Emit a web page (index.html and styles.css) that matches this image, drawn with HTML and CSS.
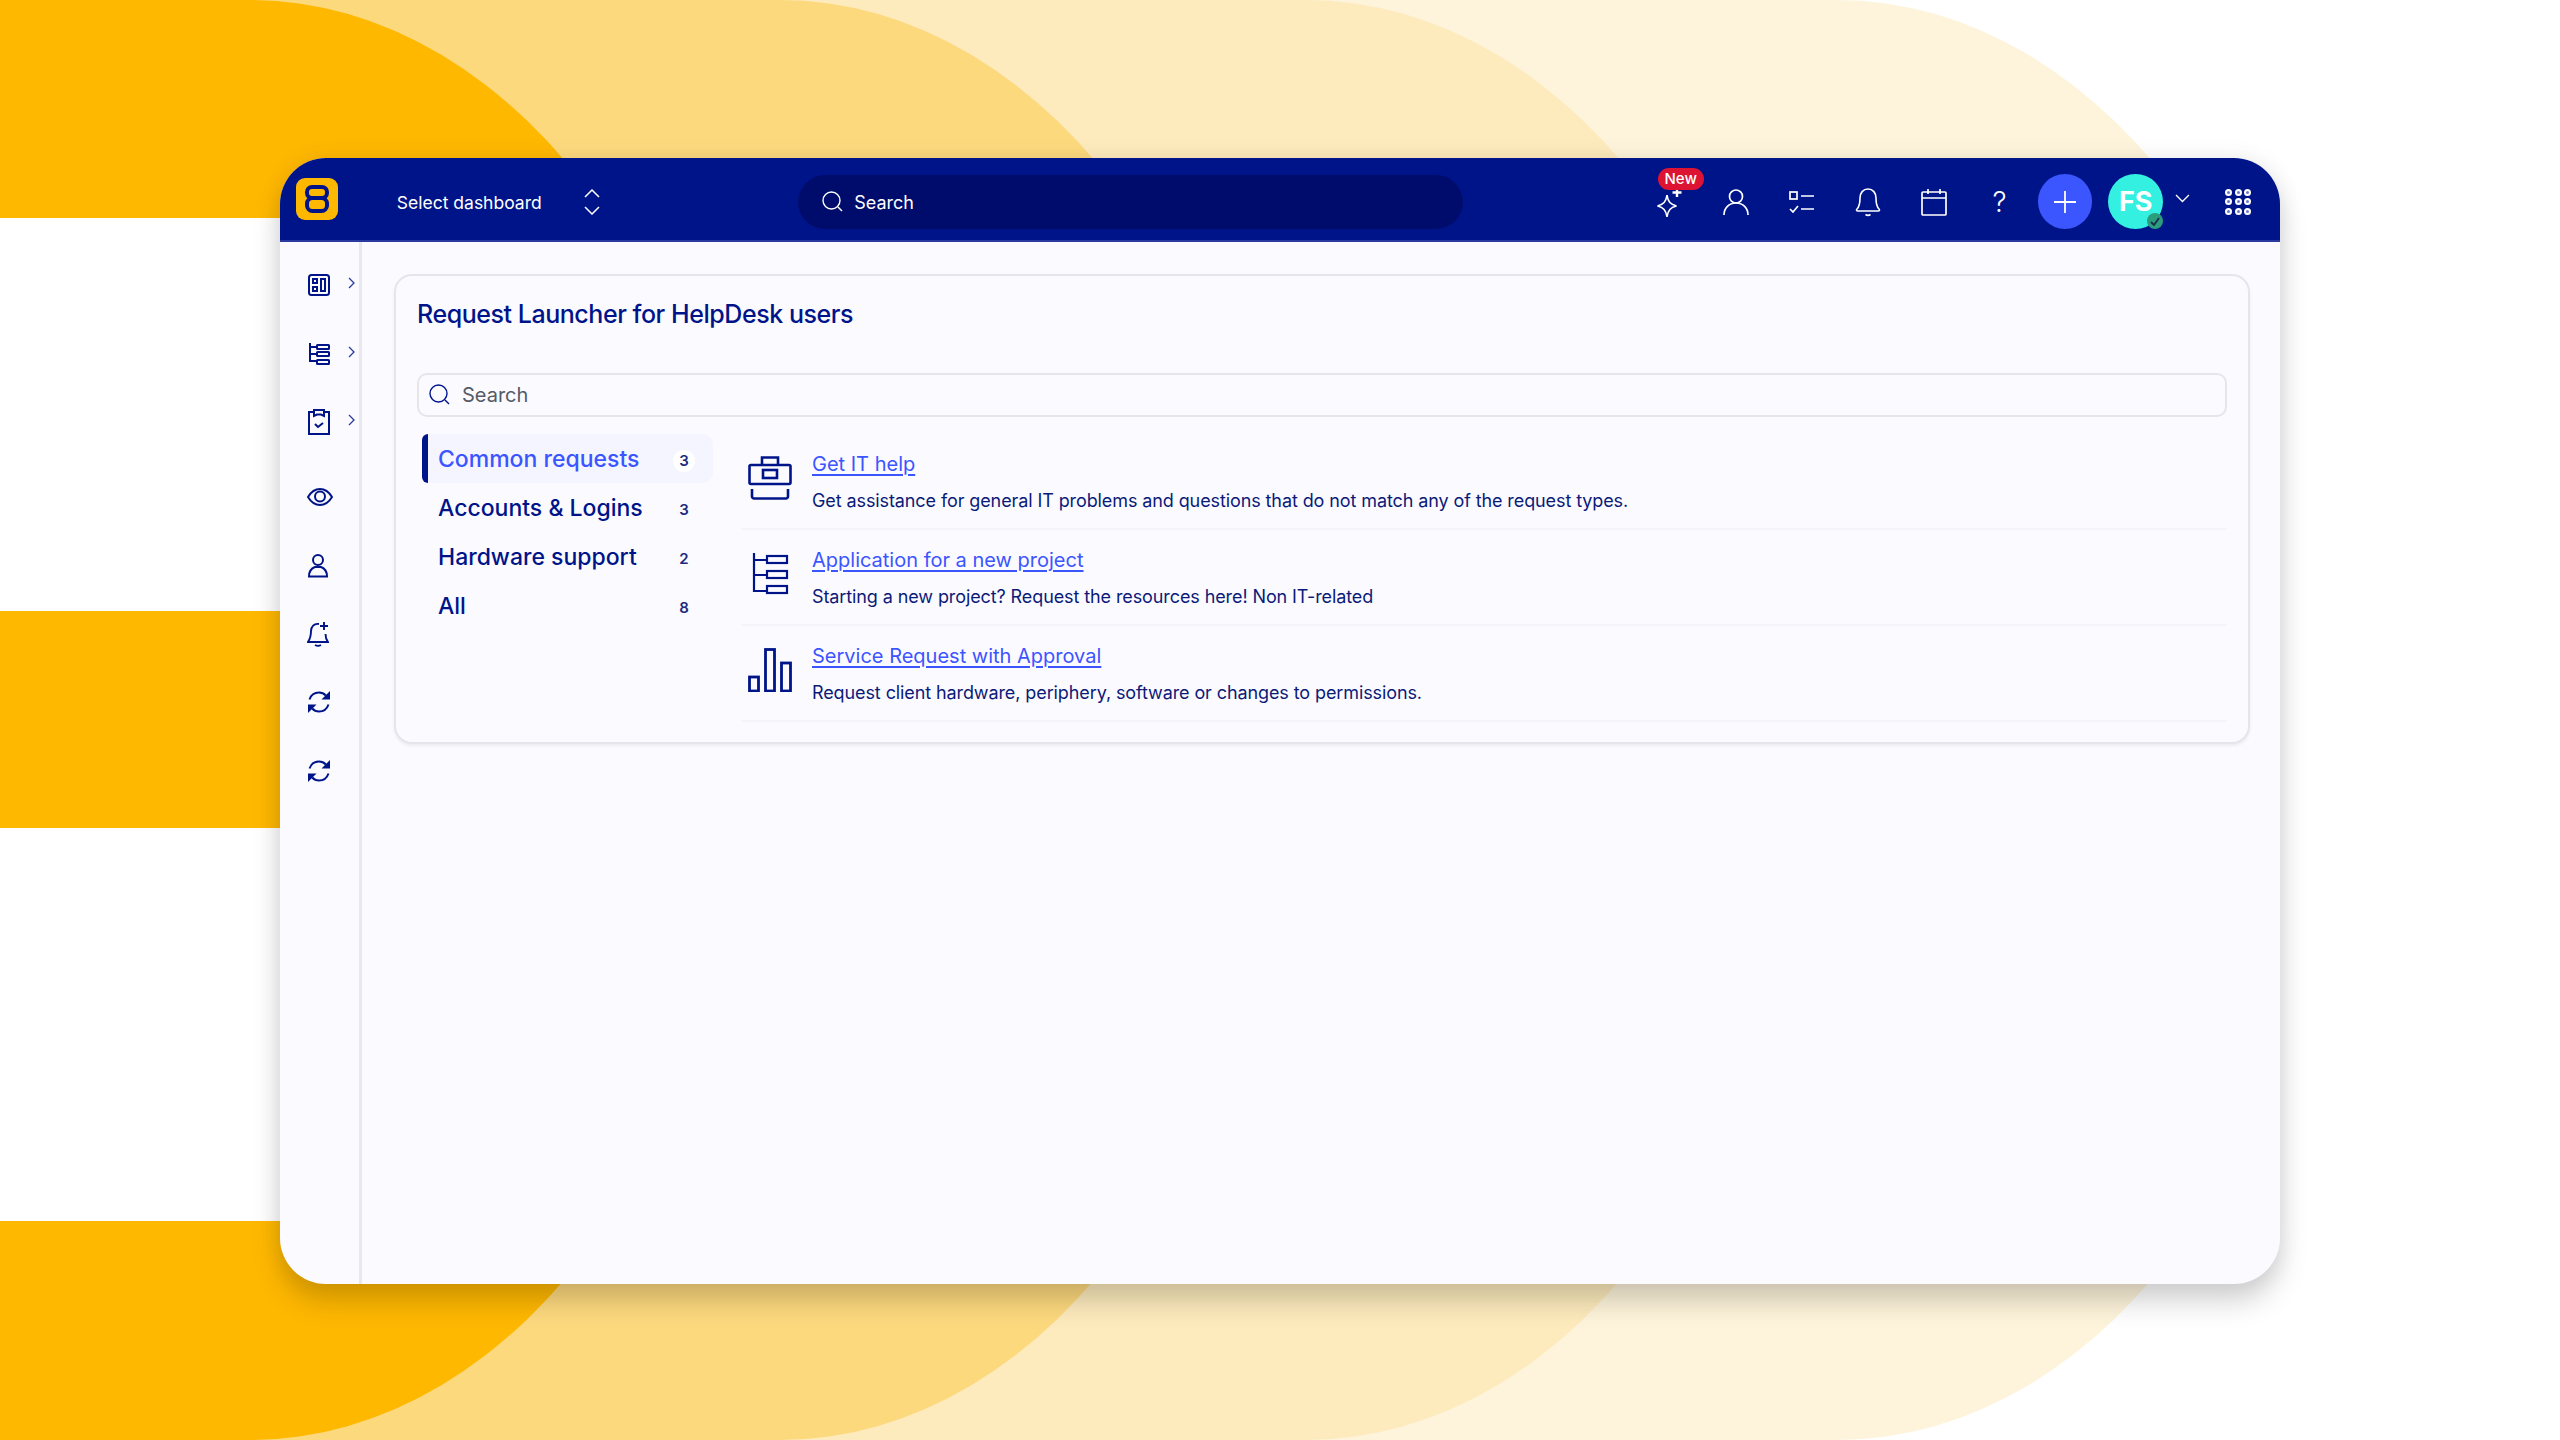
FILE: index.html
```html
<!DOCTYPE html>
<html lang="en">
<head>
  <meta charset="UTF-8" />
  <title>Request Launcher</title>
  <link rel="stylesheet" href="styles.css">
</head>
<body>
  <div class="backdrop">
    <div class="wave wave-4"></div>
    <div class="wave wave-3"></div>
    <div class="wave wave-2"></div>
    <div class="wave wave-1"></div>
    <div class="stripe stripe-top"></div>
    <div class="stripe stripe-bottom"></div>
  </div>

  <div class="window">
    <header class="topbar">
      <div class="logo">
        <svg width="26" height="28" viewBox="0 0 26 28" fill="none" stroke="#001489" stroke-width="4"><rect x="3" y="2" width="20" height="11" rx="5"/><rect x="3" y="13" width="20" height="13" rx="5.5"/></svg>
      </div>
      <div class="dash-select">
        <span class="dash-label">Select dashboard</span>
        <svg width="18" height="26" viewBox="0 0 18 26" fill="none" stroke="#fff" stroke-width="1.5"><path d="M2 8l7-7 7 7M2 18l7 7 7-7"/></svg>
      </div>
      <div class="top-search">
        <svg width="24" height="24" viewBox="0 0 24 24" fill="none" stroke="#fff" stroke-width="1.4"><circle cx="10.5" cy="10.5" r="8.5"/><path d="M17 17l4 4"/></svg>
        <span class="dash-label">Search</span>
      </div>
      <nav class="top-icons">
        <div class="top-icon">
          <span class="badge-new">New</span>
          <svg width="28" height="33" viewBox="0 0 28 33" fill="none" stroke="#fff" stroke-width="1.6"><path d="M11 10c1 7 3.500 9.500 9.500 11-6 1.500-8.500 4-9.500 11-1-7-3.500-9.500-9.500-11 6-1.500 8.500-4 9.500-11z"/><path d="M21 3v9M16.500 7.500h9" stroke-width="2.400"/></svg>
        </div>
        <div class="top-icon">
          <svg width="26" height="28" viewBox="0 0 26 28" fill="none" stroke="#fff" stroke-width="1.7"><circle cx="13" cy="8.500" r="6.500"/><path d="M1 27c0-7 5-12 12-12s12 5 12 12"/></svg>
        </div>
        <div class="top-icon">
          <svg width="26" height="26" viewBox="0 0 26 26" fill="none" stroke="#fff" stroke-width="1.700"><rect x="1" y="3" width="7" height="7"/><path d="M12 7h13M1 20l3 3 5-6M12 20h13"/></svg>
        </div>
        <div class="top-icon">
          <svg width="26" height="30" viewBox="0 0 26 30" fill="none" stroke="#fff" stroke-width="1.600"><path d="M13 2c-5 0-8 4-8 9 0 6-1 9-3 11-1 1-.5 2 1 2h20c1.500 0 2-1 1-2-2-2-3-5-3-11 0-5-3-9-8-9z"/><path d="M10.500 27.500c1.500 1 3.500 1 5 0"/></svg>
        </div>
        <div class="top-icon">
          <svg width="26" height="28" viewBox="0 0 26 28" fill="none" stroke="#fff" stroke-width="1.700"><rect x="1" y="4" width="24" height="23" rx="1"/><path d="M1 10h24M7 1v5M19 1v5"/></svg>
        </div>
        <div class="top-icon">
          <span class="help">?</span>
        </div>
      </nav>
      <div class="add-btn">
        <svg width="24" height="24" viewBox="0 0 24 24" fill="none" stroke="#fff" stroke-width="1.800"><path d="M12 1v22M1 12h22"/></svg>
      </div>
      <div class="avatar">FS
        <span class="avatar-status">
          <svg width="10" height="9" viewBox="0 0 10 9" fill="none" stroke="#1d2b4f" stroke-width="1.800"><path d="M1 5l3 3 5-7"/></svg>
        </span>
      </div>
      <svg class="avatar-caret" width="15" height="9" viewBox="0 0 15 9" fill="none" stroke="#fff" stroke-width="1.300"><path d="M1 1l6.500 6.500L14 1"/></svg>
      <div class="apps">
        <i></i><i></i><i></i><i></i><i></i><i></i><i></i><i></i><i></i>
      </div>
    </header>

    <div class="body-row">
      <aside class="sidebar">
        <div class="side-item">
          <svg width="24" height="24" viewBox="0 0 24 24" fill="none" stroke="#001489" stroke-width="2"><rect x="2" y="2" width="20" height="20" rx="2.500"/><rect x="6" y="6" width="4" height="4"/><rect x="6" y="14" width="4" height="4"/><rect x="14" y="6" width="4" height="12"/></svg>
          <svg class="side-caret" width="7" height="12" viewBox="0 0 7 12" fill="none" stroke="#2b3a9f" stroke-width="1.300"><path d="M1 1l5 5-5 5"/></svg>
        </div>
        <div class="side-item">
          <svg width="24" height="24" viewBox="0 0 24 24" fill="none" stroke="#001489" stroke-width="2"><path d="M3 1v18h7M3 5h7M3 12h7"/><rect x="10" y="3" width="12" height="4" rx=".5"/><rect x="10" y="10" width="12" height="4" rx=".5"/><rect x="10" y="18" width="12" height="4" rx=".5"/></svg>
          <svg class="side-caret" width="7" height="12" viewBox="0 0 7 12" fill="none" stroke="#2b3a9f" stroke-width="1.300"><path d="M1 1l5 5-5 5"/></svg>
        </div>
        <div class="side-item">
          <svg width="24" height="26" viewBox="0 0 24 26" fill="none" stroke="#001489" stroke-width="2"><path d="M7 3H2v22h20V3h-5"/><path d="M7 1h10v6l-3-1.500h-4L7 7z"/><path d="M8 15l3 3 5-4"/></svg>
          <svg class="side-caret" width="7" height="12" viewBox="0 0 7 12" fill="none" stroke="#2b3a9f" stroke-width="1.300"><path d="M1 1l5 5-5 5"/></svg>
        </div>
        <div class="side-item side-break">
          <svg width="26" height="18" viewBox="0 0 26 18" fill="none" stroke="#001489" stroke-width="2"><path d="M1 9c3-5 7-8 12-8s9 3 12 8c-3 5-7 8-12 8S4 14 1 9z"/><circle cx="13" cy="8.500" r="5"/></svg>
        </div>
        <div class="side-item">
          <svg width="22" height="25" viewBox="0 0 22 25" fill="none" stroke="#001489" stroke-width="2"><circle cx="11" cy="7" r="5"/><path d="M2 23.500c0-5 2-8 6-9.500h6c4 1.500 6 4.500 6 9.500z"/></svg>
        </div>
        <div class="side-item">
          <svg width="22" height="26" viewBox="0 0 22 26" fill="none" stroke="#001489" stroke-width="1.900"><path d="M12 3c-5-1-8 3-8 7 0 5-1 8-3 11h20c-1.500-2-2.500-4-2.500-8M8 24c2 1.200 4 1.200 6 0"/><path d="M17 1v8M13 5h8"/></svg>
        </div>
        <div class="side-item">
          <svg width="24" height="24" viewBox="0 0 24 24" fill="none" stroke="#001489" stroke-width="2"><path d="M2.500 9.500C4 5 7.500 2.500 12 2.500c2.800 0 5 1 6.800 3"/><path d="M21.500 14.500C20 19 16.500 21.500 12 21.500c-2.800 0-5-1-6.800-3"/><path d="M23 1v8.500h-8.500z" fill="#001489" stroke="none"/><path d="M1 23v-8.500h8.500z" fill="#001489" stroke="none"/></svg>
        </div>
        <div class="side-item">
          <svg width="24" height="24" viewBox="0 0 24 24" fill="none" stroke="#001489" stroke-width="2"><path d="M2.500 9.500C4 5 7.500 2.500 12 2.500c2.800 0 5 1 6.800 3"/><path d="M21.500 14.500C20 19 16.500 21.500 12 21.500c-2.800 0-5-1-6.800-3"/><path d="M23 1v8.500h-8.500z" fill="#001489" stroke="none"/><path d="M1 23v-8.500h8.500z" fill="#001489" stroke="none"/></svg>
        </div>
      </aside>

      <main class="content">
        <section class="card">
          <h1 class="card-title">Request Launcher for HelpDesk users</h1>
          <div class="card-search">
            <svg width="24" height="24" viewBox="0 0 24 24" fill="none" stroke="#001489" stroke-width="1.400"><circle cx="10.500" cy="10.500" r="8.500"/><path d="M17 17l4 4"/></svg>
            <span>Search</span>
          </div>
          <div class="launcher">
            <ul class="cats">
              <li class="cat active"><span>Common requests</span><b class="count">3</b></li>
              <li class="cat"><span>Accounts &amp; Logins</span><b class="count">3</b></li>
              <li class="cat"><span>Hardware support</span><b class="count">2</b></li>
              <li class="cat"><span>All</span><b class="count">8</b></li>
            </ul>
            <div class="requests">
              <div class="request">
                <svg width="44" height="44" viewBox="0 0 44 44" fill="none" stroke="#001489" stroke-width="2.600"><path d="M14 9V1.500h16V9"/><rect x="1.500" y="9" width="41" height="19" rx="1.500"/><rect x="15" y="14" width="14" height="8"/><path d="M4 33v7.500c0 1 1 2 2 2h32c1 0 2-1 2-2V33"/></svg>
                <div>
                  <a class="request-link" href="#">Get IT help</a>
                  <p class="request-desc">Get assistance for general IT problems and questions that do not match any of the request types.</p>
                </div>
              </div>
              <div class="request">
                <svg width="44" height="44" viewBox="0 0 44 44" fill="none" stroke="#001489" stroke-width="2.200"><path d="M6 1v38h13M6 8h13M6 23h13"/><rect x="19" y="4" width="20" height="7"/><rect x="19" y="19" width="20" height="7"/><rect x="19" y="34" width="20" height="7"/></svg>
                <div>
                  <a class="request-link" href="#">Application for a new project</a>
                  <p class="request-desc">Starting a new project? Request the resources here! Non IT-related</p>
                </div>
              </div>
              <div class="request">
                <svg width="44" height="44" viewBox="0 0 44 44" fill="none" stroke="#001489" stroke-width="2.800"><rect x="1.500" y="29" width="9" height="14"/><rect x="17.500" y="1.500" width="9" height="41.500"/><rect x="33.500" y="15" width="9" height="28"/></svg>
                <div>
                  <a class="request-link" href="#">Service Request with Approval</a>
                  <p class="request-desc">Request client hardware, periphery, software or changes to permissions.</p>
                </div>
              </div>
            </div>
          </div>
        </section>
      </main>
    </div>
  </div>
</body>
</html>
```

FILE: styles.css
```css
* {
  box-sizing: border-box;
}
html, body {
  height: 100%;
}
body {
  margin: 0;
  padding: 158px 280px 156px;
  background: #fff;
  font-family: 'Inter', sans-serif;
  color: #001489;
  overflow: hidden;
}

/* background shapes */
.backdrop {
  position: absolute;
  top: 0;
  left: 0;
  width: 2250px;
  height: 1440px;
  overflow: hidden;
}
.wave {
  position: absolute;
  top: 0;
  left: 0;
  height: 1440px;
  border-radius: 0 500px 500px 0 / 0 720px 720px 0;
}
.wave-1 { width: 750px; background: #ffb800; }
.wave-2 { width: 1280px; background: #fdd97e; }
.wave-3 { width: 1806px; background: #fdebbd; }
.wave-4 { width: 2337px; background: #fef4db; }
.stripe {
  position: absolute;
  left: 0;
  width: 300px;
  background: #fff;
}
.stripe-top { top: 218px; height: 393px; }
.stripe-bottom { top: 828px; height: 393px; }

/* window */
.window {
  position: relative;
  width: 2000px;
  height: 1126px;
  display: flex;
  flex-direction: column;
  background: #fbfaff;
  border-radius: 46px;
  box-shadow: 0 18px 28px rgba(0,0,0,0.17), 0 0 24px rgba(0,0,0,0.07);
  overflow: hidden;
}

/* top bar */
.topbar {
  flex: none;
  height: 84px;
  display: flex;
  align-items: center;
  padding: 5px 29px 0 16px;
  background: #001489;
  border-bottom: 2px solid #2b3a9f;
  color: #fff;
}
.logo {
  width: 42px;
  height: 42px;
  margin-bottom: 5px;
  display: flex;
  align-items: center;
  justify-content: center;
  background: #ffb800;
  border-radius: 9px;
}
.dash-select {
  width: 403px;
  margin-left: 59px;
  display: flex;
  align-items: center;
  gap: 41px;
  font-size: 17.500px;
}
.dash-label {
  margin-top: 2px;
}
.top-search {
  width: 667px;
  height: 54px;
  display: flex;
  align-items: center;
  gap: 9px;
  padding-left: 23px;
  background: #000c6c;
  border-radius: 27px;
  font-size: 18px;
}
.top-icons {
  margin-left: 174px;
  display: flex;
}
.top-icon {
  position: relative;
  width: 66px;
  height: 40px;
  display: flex;
  align-items: center;
  justify-content: center;
}
.badge-new {
  position: absolute;
  top: -14px;
  left: 21px;
  height: 22px;
  padding: 0 7px;
  display: flex;
  align-items: center;
  background: #dc1332;
  border-radius: 11px;
  font-size: 15px;
  font-weight: 500;
}
.help {
  font-size: 28px;
  font-weight: 300;
}
.add-btn {
  width: 55px;
  height: 55px;
  margin-left: 5px;
  display: flex;
  align-items: center;
  justify-content: center;
  background: #3b55ff;
  border-radius: 50%;
}
.avatar {
  position: relative;
  width: 55px;
  height: 55px;
  margin-left: 16px;
  display: flex;
  align-items: center;
  justify-content: center;
  background: #33f0e0;
  border-radius: 50%;
  font-size: 27px;
  font-weight: 700;
}
.avatar-status {
  position: absolute;
  right: 0;
  bottom: 0;
  width: 16px;
  height: 16px;
  display: flex;
  align-items: center;
  justify-content: center;
  background: #2a9d7c;
  border-radius: 50%;
}
.avatar-caret {
  margin: -6px 0 0 12px;
}
.apps {
  width: 26px;
  margin-left: 35px;
  display: grid;
  grid-template-columns: repeat(3, 7px);
  gap: 2.500px;
}
.apps i {
  width: 7px;
  height: 7px;
  border: 2px solid #fff;
  background: #6f7cc4;
  border-radius: 50%;
}

/* sidebar */
.body-row {
  flex: 1;
  display: flex;
  min-height: 0;
}
.sidebar {
  flex: none;
  width: 82px;
  padding-top: 9px;
  display: flex;
  flex-direction: column;
  border-right: 3px solid #e8e8f0;
}
.side-item {
  position: relative;
  flex: none;
  height: 68.500px;
  padding-left: 27px;
  display: flex;
  align-items: center;
}
.side-break {
  margin-top: 6px;
}
.side-caret {
  position: absolute;
  left: 68px;
  top: 26px;
}

/* content */
.content {
  flex: 1;
  padding: 32px 30px 0 32px;
}
.card {
  height: 470px;
  padding: 0 21px;
  background: #fbfaff;
  border: 2px solid #e6e5ec;
  border-radius: 18px;
  box-shadow: 0 2px 3px rgba(0,0,0,0.06);
}
.card-title {
  margin: 22px 0 0;
  height: 32px;
  font-size: 25px;
  line-height: 32px;
  font-weight: 500;
  letter-spacing: -0.450px;
}
.card-search {
  height: 44px;
  margin-top: 43px;
  padding-left: 9px;
  display: flex;
  align-items: center;
  gap: 10px;
  background: #fbfaff;
  border: 2px solid #e6e5ec;
  border-radius: 10px;
  font-size: 20px;
  color: #555a66;
}
.launcher {
  display: flex;
  margin-top: 17px;
}
.cats {
  flex: none;
  width: 291px;
  margin: 0 0 0 5px;
  padding: 0;
  list-style: none;
}
.cat {
  height: 49px;
  display: flex;
  align-items: center;
  padding: 0 17px 0 10px;
  font-size: 23px;
  font-weight: 500;
  border-left: 6px solid transparent;
  border-radius: 6px 10px 10px 6px;
}
.cat span {
  flex: 1;
}
.cat.active {
  background: #f4f5ff;
  border-left-color: #001489;
  color: #3b55ff;
}
.count {
  width: 22px;
  height: 22px;
  margin: 4px 1px 0 0;
  display: flex;
  align-items: center;
  justify-content: center;
  font-size: 15px;
  font-weight: 600;
  color: #1d2b7f;
  border-radius: 50%;
}
.cat.active .count {
  background: #fff;
}
.requests {
  flex: 1;
  margin-left: 28px;
}
.request {
  height: 96px;
  padding: 16px 0 0 6.500px;
  display: flex;
  gap: 20.500px;
  border-bottom: 2px solid #f5f4fa;
}
.request svg {
  flex: none;
  margin-top: 6px;
}
.request-link {
  display: block;
  font-size: 20px;
  line-height: 28px;
  color: #3b55ff;
  text-decoration: underline;
  text-underline-offset: 3px;
}
.request-desc {
  margin: 11px 0 0;
  font-size: 18px;
  line-height: 24px;
  letter-spacing: -0.100px;
  color: #0b1a78;
}
```
